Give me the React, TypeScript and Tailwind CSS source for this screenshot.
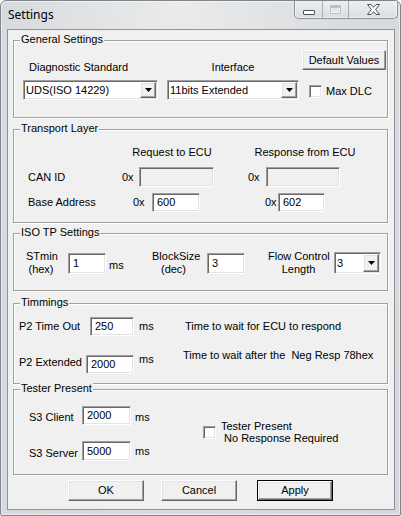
import type { ReactNode } from "react";

const sunken =
  "border border-t-[#a0a0a0] border-l-[#a0a0a0] border-r-white border-b-white shadow-[inset_1px_1px_0_#696969,inset_-1px_-1px_0_#e3e3e3]";
const raised =
  "border border-t-white border-l-white border-r-[#696969] border-b-[#696969] bg-[#f0f0f0] shadow-[inset_-1px_-1px_0_#a0a0a0,inset_1px_1px_0_#e3e3e3]";

function GroupBox({ title, className, children }: { title: string; className: string; children: ReactNode }) {
  return (
    <div
      className={`relative ml-[5px] mr-[6px] border border-[#a0a0a0] shadow-[inset_1px_1px_0_#fff,1px_1px_0_#fff] ${className}`}
    >
      <span className="absolute left-[6px] -top-[8px] bg-[#f0f0f0] px-[1px] leading-[13px]">{title}</span>
      {children}
    </div>
  );
}

function TextBox({ value, className, disabled }: { value?: string; className: string; disabled?: boolean }) {
  return (
    <div className={`flex shrink-0 items-center pl-[4px] ${sunken} ${disabled ? "bg-[#f0f0f0]" : "bg-white"} ${className}`}>
      {value}
    </div>
  );
}

function ComboBox({ value, className }: { value: string; className: string }) {
  return (
    <div className={`flex shrink-0 bg-white ${sunken} ${className}`}>
      <span className="flex flex-1 items-center pl-[2px]">{value}</span>
      <span className={`m-px flex w-[16px] items-center justify-center ${raised}`}>
        <svg width="7" height="4" viewBox="0 0 7 4">
          <path d="M0 0h7L3.5 4z" fill="#000" />
        </svg>
      </span>
    </div>
  );
}

function CheckBox() {
  return <span className={`block h-[13px] w-[13px] shrink-0 bg-white ${sunken}`} />;
}

function Button({ children, className, isDefault }: { children: ReactNode; className: string; isDefault?: boolean }) {
  if (isDefault) {
    return (
      <div className={`border border-black ${className}`}>
        <div className={`flex h-full items-center justify-center ${raised}`}>{children}</div>
      </div>
    );
  }
  return <div className={`flex items-center justify-center ${raised} ${className}`}>{children}</div>;
}

function CaptionButtons() {
  return (
    <div className="-mt-px mr-[2px] flex h-[19px] overflow-hidden rounded-b-[5px] border border-t-0 border-[#8d9298] bg-[linear-gradient(#eef0f3,#d9dde2)] shadow-[inset_0_0_0_1px_rgba(255,255,255,0.55)]">
      <div className="flex w-[28px] items-end justify-center border-r border-[#a9aeb4] pb-[3px]">
        <span className="block h-[5px] w-[12px] rounded-[1px] border border-[#4a5057] bg-white" />
      </div>
      <div className="flex w-[26px] items-center justify-center border-r border-[#a9aeb4]">
        <span className="block h-[9px] w-[11px] border border-[#bcc1c6] shadow-[inset_0_2px_0_#bcc1c6,inset_0_0_0_1px_#f4f5f6]" />
      </div>
      <div className="flex w-[48px] items-center justify-center">
        <svg width="13" height="11" viewBox="0 0 13 11">
          <polygon
            points="0.5,0.5 4,0.5 6.5,3.3 9,0.5 12.5,0.5 8.6,5.5 12.5,10.5 9,10.5 6.5,7.7 4,10.5 0.5,10.5 4.4,5.5"
            fill="#fff"
            stroke="#4a5057"
            strokeWidth="1"
          />
        </svg>
      </div>
    </div>
  );
}

export default function App() {
  return (
    <div className="h-[516px] w-[401px] overflow-hidden rounded-t-[6px] rounded-b-[2px] border border-[#7f858b] bg-[radial-gradient(ellipse_at_45%_0%,#ebebeb,#d8dbde_55%,#d4d8dc)] shadow-[inset_0_0_0_1px_rgba(255,255,255,0.5)]">
      <div className="flex h-[28px] items-start justify-between">
        <span className="pl-[7px] pt-[6px] font-['Noto_Sans',sans-serif] text-[12px] leading-[16px] text-black">
          Settings
        </span>
        <CaptionButtons />
      </div>

      <div className="ml-[6px] mr-[5px] flex h-[481px] flex-col border border-[#8e9399] bg-[#f0f0f0] font-['Liberation_Sans',Arial,sans-serif] text-[11px] leading-[13px] text-black">
        <GroupBox title="General Settings" className="mt-[10px] h-[78px]">
          <div className="flex items-start">
            <div className="ml-[9px] mt-[20px] flex w-[135px] flex-col">
              <span className="pl-[6px]">Diagnostic Standard</span>
              <ComboBox value="UDS(ISO 14229)" className="mt-[6px] h-[20px]" />
            </div>
            <div className="ml-[9px] mt-[20px] flex w-[132px] flex-col">
              <span className="text-center">Interface</span>
              <ComboBox value="11bits Extended" className="mt-[6px] h-[20px]" />
            </div>
            <div className="ml-[3px] mt-[9px] flex w-[84px] flex-col">
              <Button className="h-[20px] whitespace-nowrap">Default Values</Button>
              <div className="ml-[7px] mt-[15px] flex items-center">
                <CheckBox />
                <span className="ml-[4px]">Max DLC</span>
              </div>
            </div>
          </div>
        </GroupBox>

        <GroupBox title="Transport Layer" className="mt-[11px] h-[94px]">
          <div className="mt-[16px] flex">
            <span className="ml-[113px] w-[90px] text-center">Request to ECU</span>
            <span className="ml-[33px] w-[110px] text-center">Response from ECU</span>
          </div>
          <div className="mt-[8px] flex h-[20px] items-center">
            <span className="ml-[14px] w-[94px]">CAN ID</span>
            <span className="w-[17px]">0x</span>
            <TextBox disabled className="h-[20px] w-[75px]" />
            <span className="ml-[34px] w-[18px]">0x</span>
            <TextBox disabled className="h-[20px] w-[74px]" />
          </div>
          <div className="mt-[6px] flex h-[19px] items-center">
            <span className="ml-[14px] w-[105px]">Base Address</span>
            <span className="w-[19px]">0x</span>
            <TextBox value="600" className="h-[19px] w-[48px]" />
            <span className="ml-[65px] w-[13px]">0x</span>
            <TextBox value="602" className="h-[19px] w-[47px]" />
          </div>
        </GroupBox>

        <GroupBox title="ISO TP Settings" className="mt-[10px] h-[58px]">
          <div className="mt-[16px] flex h-[26px] items-center">
            <span className="ml-[12px] w-[30px] text-center">
              STmin
              <br />
              (hex)
            </span>
            <TextBox value="1" className="ml-[12px] h-[21px] w-[38px]" />
            <span className="ml-[3px] mt-[5px] w-[16px]">ms</span>
            <span className="ml-[27px] w-[43px] text-center">
              BlockSize
              <br />
              (dec)
            </span>
            <TextBox value="3" className="ml-[12px] h-[21px] w-[38px]" />
            <span className="ml-[23px] w-[61px] whitespace-nowrap text-center">
              Flow Control
              <br />
              Length
            </span>
            <ComboBox value="3" className="ml-[5px] h-[22px] w-[47px]" />
          </div>
        </GroupBox>

        <GroupBox title="Timmings" className="mt-[12px] h-[81px]">
          <div className="mt-[13px] flex h-[19px] items-center">
            <span className="ml-[5px] w-[71px]">P2 Time Out</span>
            <TextBox value="250" className="h-[19px] w-[44px]" />
            <span className="ml-[5px] w-[16px]">ms</span>
            <span className="ml-[30px]">Time to wait for ECU to respond</span>
          </div>
          <div className="mt-[13px] flex items-start">
            <span className="ml-[5px] mt-[7px] w-[67px]">P2 Extended</span>
            <TextBox value="2000" className="mt-[6px] h-[19px] w-[48px]" />
            <span className="ml-[5px] mt-[4px] w-[16px]">ms</span>
            <span className="ml-[28px] whitespace-pre">Time to wait after the  Neg Resp 78hex</span>
          </div>
        </GroupBox>

        <GroupBox title="Tester Present" className="mt-[5px] h-[86px]">
          <div className="flex items-start">
            <div className="ml-[15px] flex flex-col">
              <div className="mt-[16px] flex h-[19px] items-center">
                <span className="w-[53px] pt-[4px]">S3 Client</span>
                <TextBox value="2000" className="h-[19px] w-[49px]" />
                <span className="ml-[4px] w-[16px] pt-[4px]">ms</span>
              </div>
              <div className="mt-[16px] flex h-[20px] items-center">
                <span className="w-[53px] pt-[5px]">S3 Server</span>
                <TextBox value="5000" className="h-[20px] w-[49px]" />
                <span className="ml-[4px] w-[16px] pt-[1px]">ms</span>
              </div>
            </div>
            <div className="ml-[52px] mt-[30px] flex items-center">
              <CheckBox />
              <span className="ml-[5px] whitespace-pre leading-[12px]">
                Tester Present
                <br />
                {" No Response Required"}
              </span>
            </div>
          </div>
        </GroupBox>

        <div className="mt-[5px] flex">
          <Button className="ml-[60px] h-[21px] w-[76px]">OK</Button>
          <Button className="ml-[17px] h-[21px] w-[76px]">Cancel</Button>
          <Button isDefault className="ml-[20px] h-[21px] w-[76px]">
            Apply
          </Button>
        </div>
      </div>
    </div>
  );
}
